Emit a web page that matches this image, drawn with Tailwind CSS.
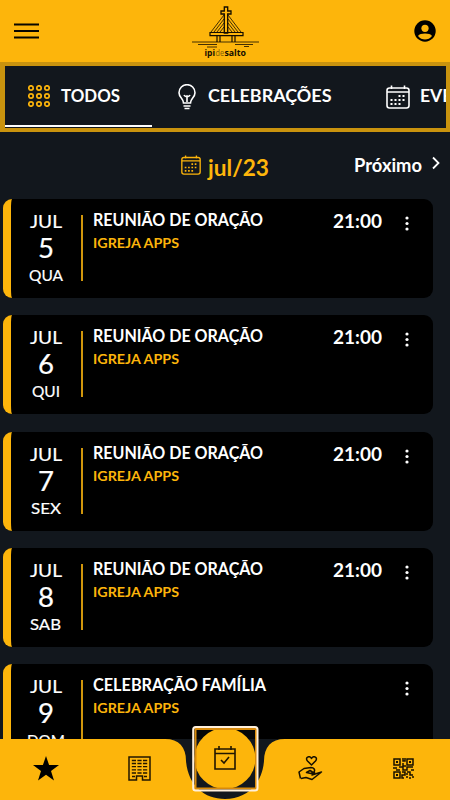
<!DOCTYPE html>
<html lang="pt-BR">
<head>
<meta charset="utf-8">
<title>ipi de salto</title>
<script src="https://cdn.jsdelivr.net/npm/@tailwindcss/browser@4"></script>
</head>
<body class="relative flex h-[800px] w-[450px] flex-col overflow-hidden bg-[#12171d] font-[Lato,sans-serif] text-white">
<svg class="hidden">
  <symbol id="cal" viewBox="0 0 24 24"><g fill="none" stroke="currentColor" stroke-width="1.6"><rect x="1" y="3" width="22" height="20" rx="2.5"/><path d="M1 7H23M5.500 .5V4M18.500 .5V4"/></g><g stroke="currentColor" stroke-width="2" stroke-dasharray="2 2"><path d="M12.500 11H20M4.500 15H20M4.500 19H15"/></g></symbol>
</svg>
<header class="flex h-[62px] shrink-0 items-center justify-between bg-[#fdb50b] pr-[14px] pl-[14px] text-black">
  <svg width="25" height="16" class="w-[85px]" viewBox="0 0 85 16"><path d="M0 1.500H25M0 8H25M0 14.500H25" stroke="#080600" stroke-width="1.900"/></svg>
  <svg width="72" height="60" viewBox="190 0 72 60" fill="none" stroke="#130d00">
    <path d="M193 41H260M199 43.500H218M236 43.500H254M208 46H218M245 45.500H250" stroke-width=".8"/>
    <path d="M225.300 6H228.700V10H232V13H228.700V32H225.300V13H222V10H225.300Z" stroke-width="1.300"/>
    <path d="M211 31.500H244V34.700H211ZM218 35V41M221 35V41M233 35V41M236 35V41" stroke-width="1.200"/>
    <path d="M225 14L212 31M225 18L215 31M225 22L218 31M225 26L221 31M229 14L242 31M229 18L239 31M229 22L236 31M229 26L233 31" stroke-width=".8"/>
    <g stroke="none" font-family="Open Sans" font-size="9"><text x="205.500" y="55.300" textLength="10.500" lengthAdjust="spacingAndGlyphs" fill="#130d00" font-weight="700">ipi</text><text x="216.500" y="55.300" textLength="8.500" lengthAdjust="spacingAndGlyphs" fill="#805b05" font-weight="400">de</text><text x="225.500" y="55.300" textLength="21.500" lengthAdjust="spacingAndGlyphs" fill="#130d00" font-weight="700">salto</text></g>
  </svg>
  <div class="flex w-[85px] justify-end"><svg width="22" height="22" viewBox="0 0 22 22"><circle cx="11" cy="11" r="10.700"/><circle cx="11" cy="8.300" r="3.600" fill="#fdb50b"/><path d="M4 16C6 12.800 16 12.800 18 16C14.500 20.700 7.500 20.700 4 16Z" fill="#fdb50b"/></svg></div>
</header>
<nav class="flex h-[70px] shrink-0 overflow-hidden border-4 border-l-[5px] border-[#c9930e]">
  <div class="flex h-[61px] w-[147px] shrink-0 items-center border-b-2 border-white pl-[23px]">
    <svg width="22" height="22" viewBox="0 0 22 22" fill="none" stroke="#fdb50b" stroke-width="1.700"><g id="dots"><circle cx="3" cy="3" r="2.200"/><circle cx="11" cy="3" r="2.200"/><circle cx="19" cy="3" r="2.200"/></g><use href="#dots" y="8"/><use href="#dots" y="16"/></svg>
    <svg class="ml-[10px]" width="62" height="24"><text x="1" y="17.500" textLength="59" lengthAdjust="spacingAndGlyphs" fill="white" font-weight="700" font-size="16.500">TODOS</text></svg>
  </div>
  <div class="flex h-[61px] w-[208px] shrink-0 items-center pl-[26px]">
    <svg width="18" height="26" viewBox="0 0 18 26" fill="none" stroke="white" stroke-width="1.600"><path d="M5.500 19C5.500 14.500 1 13.500 1 8.700A8 8 0 0 1 17 8.700C17 13.500 12.500 14.500 12.500 19ZM9 18V12M6 11Q7 13 9 12Q11 13 12 11M5.500 22H12.500M6.500 24.500H11.500"/></svg>
    <svg class="ml-[12px]" width="126" height="24"><text x="0" y="17" textLength="123.500" lengthAdjust="spacingAndGlyphs" fill="white" font-weight="700" font-size="16.500">CELEBRAÇÕES</text></svg>
  </div>
  <div class="flex h-[61px] shrink-0 items-center pl-[26px]">
    <svg width="24" height="24"><use href="#cal"/></svg>
    <svg class="ml-[10px]" width="81" height="24"><text x="0" y="17" textLength="80" lengthAdjust="spacingAndGlyphs" fill="white" font-weight="700" font-size="16.500">EVENTOS</text></svg>
  </div>
</nav>
<section class="flex h-[67px] shrink-0 items-center pl-[181px]">
  <svg class="mb-[1px] text-[#fdb50b]" width="20" height="20"><use href="#cal"/></svg>
  <svg class="ml-[6px]" width="64" height="36"><text x="1" y="28.300" textLength="61" lengthAdjust="spacingAndGlyphs" fill="#fdb50b" font-size="23" font-weight="700">jul/23</text></svg>
  <svg class="ml-[82px]" width="71" height="34"><text x="1" y="23" textLength="68" lengthAdjust="spacingAndGlyphs" fill="white" font-size="18" font-weight="700">Próximo</text></svg>
  <svg class="mb-[5px] ml-[8px]" width="8" height="14" fill="none" stroke="white" stroke-width="1.800"><path d="M1 1.500L6.500 7L1 12.500"/></svg>
</section>
<main id="events" class="flex flex-col gap-[17.300px] pl-[3px]"></main>

<footer class="absolute bottom-0 left-0 h-[76px] w-[450px]">
  <svg class="absolute inset-0" width="450" height="76" viewBox="0 724 450 76">
    <path d="M165 739H285V800H165Z" fill="#12171d"/>
    <path d="M0 739H165C179 739 186 747 186 761C188 785 204 799 225 799C246 799 262 785 264 761C264 747 271 739 285 739H450V800H0Z" fill="#fdb50b"/>
    <path d="M195 729H256V739H195Z" fill="#050607"/>
    <path d="M195 739H256V789H195Z" fill="#12171d"/>
    <circle cx="225" cy="758.500" r="30.500" fill="#fdb50b"/>
    <rect x="195.500" y="729" width="60.500" height="59.500" fill="none" stroke="#d98a09" stroke-width="2"/>
    <rect x="193.200" y="727" width="64.300" height="63.600" rx="2.500" fill="none" stroke="#fff0dc" stroke-width="2"/>
  </svg>
  <div class="relative flex h-full items-center pt-[13px] pl-[33px]">
    <svg width="26" height="25" viewBox="0 0 26 25"><path d="M13 0L16.100 9.100H26L18 15L21 24.500L13 18.800L5 24.500L8 15L0 9.100H9.900Z"/></svg>
    <svg class="ml-[69px]" width="23" height="25" viewBox="0 0 23 25" fill="none" stroke="#211600" stroke-width="1.500"><path d="M1 1H22V24H14.500V20H8.500V24H1Z"/><path d="M3.800 4.500H19.200M3.800 7.500H19.200M3.800 10.700H19.200M3.800 13.800H19.200M3.800 17H19.200" stroke-width="1.300" stroke-dasharray="4.200 1.400"/><path d="M4 20.500H7M16 20.500H19" stroke-width="1.300"/></svg>
    <svg class="mb-[21px] ml-[63px]" width="22" height="24" viewBox="0 0 22 24" fill="none" stroke="#211600" stroke-width="1.600"><path d="M1 3H21V23H1ZM1 7.500H21M5 0V4M17 0V4M7 14L10 17L15 11"/></svg>
    <svg class="ml-[62px]" width="25" height="25" viewBox="0 0 25 25" fill="none" stroke="#171000" stroke-width="1.500" stroke-linejoin="round"><path d="M13.500 9L9.500 5C6.500 1.500 11.500-1 13.500 2.500C15.500-1 20.500 1.500 17.500 5ZM2.500 22.500L1 16L6 12.500L13 11.500C16 11.500 17.500 14 16 16L13 17.500L8.500 16.500L12 14.500L14.500 16M17 16L14 19L23.500 16L14 23.500L8 21.500L3 22.500"/></svg>
    <svg class="ml-[70px]" width="21" height="21" viewBox="0 0 21 21" fill="none" stroke="#171000" stroke-width="1.500"><path d="M1 1H7V7H1ZM14 1H20V7H14ZM1 14H7V20H1Z"/><path d="M3 4H5M16 4H18M3 17H5" stroke-width="2"/><path d="M10 0V3H12V0M10 5V8H13M0 10H4M6 9H10V12H14V9H20M9 14H12V17H9V20H11M14 14H17V17H20M14 18V20M18 12H21M13 16H15M17 19V21M19 19H21M3 12H7"/></svg>
  </div>
</footer>
<script>
const days = [["5","QUA"],["6","QUI"],["7","SEX"],["8","SAB"],["9","DOM"]];
const label = (s, y, w, size, weight, fill) => `<text x="0" y="${y}" textLength="${w}" lengthAdjust="spacingAndGlyphs" fill="${fill}" font-size="${size}" font-weight="${weight}">${s}</text>`;
document.getElementById("events").innerHTML = days.map(([d, w], i) => `
<article class="flex h-[99px] w-[430px] shrink-0 overflow-hidden rounded-[9px] border-l-8 border-[#fdb50b] bg-black">
  <div class="flex w-[70px] shrink-0 flex-col items-center text-center">
    <svg width="70" height="99" fill="white"><g stroke="white" stroke-width=".2"><text x="19" y="28.500" font-size="17.500" textLength="32" lengthAdjust="spacingAndGlyphs">JUL</text><text x="35" y="58.500" font-size="26" text-anchor="middle" textLength="16" lengthAdjust="spacingAndGlyphs">${d}</text><text x="${[18,21,20,19,16][i]}" y="81.500" font-size="16" textLength="${[34,28,30,31,38][i]}" lengthAdjust="spacingAndGlyphs">${w}</text></g></svg>
  </div>
  <div class="mt-4 h-[66px] w-[2px] shrink-0 bg-[#d0960c]"></div>
  <svg class="ml-[10px] shrink-0" width="240" height="60">${label(i < 4 ? "REUNIÃO DE ORAÇÃO" : "CELEBRAÇÃO FAMÍLIA", 26.5, i < 4 ? 170 : 173, 16.5, 700, "white")}${label("IGREJA APPS", 49.3, 86, 14, 700, "#fdb50b")}</svg>
  <svg class="shrink-0" width="50" height="40">${i < 4 ? label("21:00", 29, 49, 18, 700, "white") : ""}</svg>
  <svg class="mt-[17px] ml-[21px]" width="6" height="16" fill="white"><circle cx="3" cy="2" r="1.600"/><circle cx="3" cy="7.500" r="1.600"/><circle cx="3" cy="13" r="1.600"/></svg>
</article>`).join("");
</script>
</body>
</html>
